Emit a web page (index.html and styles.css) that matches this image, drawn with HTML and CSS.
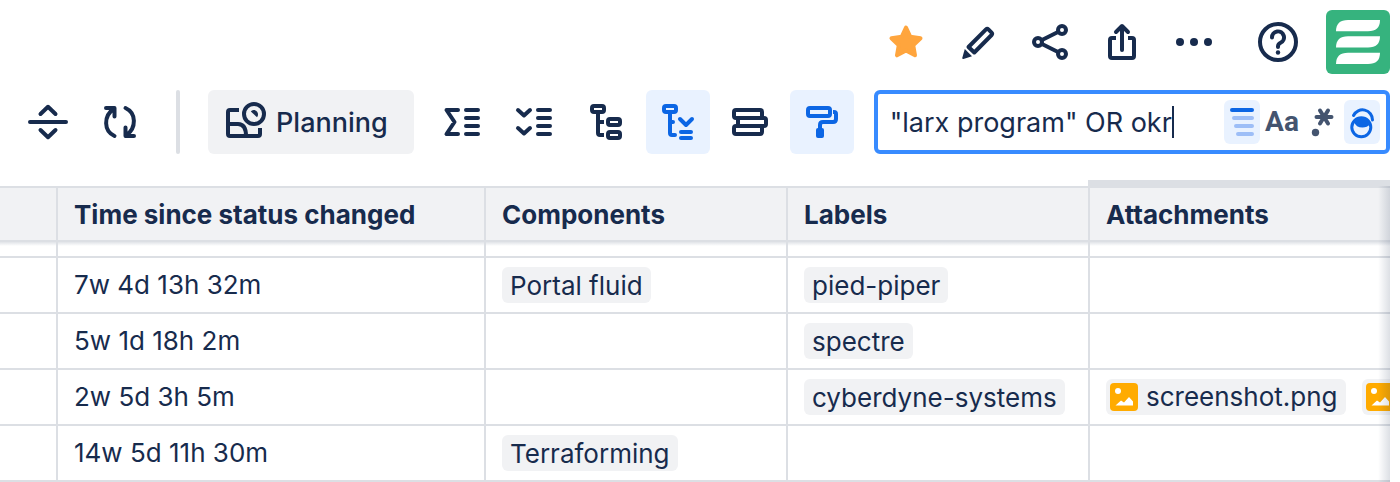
FILE: index.html
```html
<!DOCTYPE html>
<html lang="en">
<head>
    <meta charset="UTF-8">
    <meta name="viewport" content="width=device-width, initial-scale=1.0">
    <title>Structure</title>
    <link rel="stylesheet" href="styles.css">
</head>
<body>
    <header class="header">
        <button class="icon-btn" aria-label="Favourite">
            <svg viewBox="0 0 64 64"><path class="star" d="M32 17.500L36.300 26.800 46.500 28.200 39.200 35.200 41 45.300 32 40.400 23 45.300 24.800 35.200 17.500 28.200 27.700 26.800Z"/></svg>
        </button>
        <button class="icon-btn" aria-label="Edit">
            <svg viewBox="0 0 64 64"><path d="M22.500 37L40 19.400q1.200-1.200 2.400 0L45.600 22.600q1.200 1.200 0 2.400L28.300 42.500z"/><path class="solid" d="M18.800 39L26 46.300 17.500 48.900q-1.500.3-1.200-1.200z"/></svg>
        </button>
        <button class="icon-btn" aria-label="Share">
            <svg viewBox="0 0 64 64"><circle cx="20" cy="32" r="4"/><circle cx="44" cy="20" r="4"/><circle cx="44" cy="44" r="4"/><path d="M24 30l16-8M24 34l16 8"/></svg>
        </button>
        <button class="icon-btn" aria-label="Export">
            <svg viewBox="0 0 64 64"><path class="flat" d="M26 28h-4q-2 0-2 2v16q0 2 2 2h20q2 0 2-2V30q0-2-2-2h-4"/><path d="M32 17v23M26 22l6-6 6 6"/></svg>
        </button>
        <button class="icon-btn" aria-label="More">
            <svg viewBox="0 0 64 64"><g class="solid"><circle cx="18" cy="32" r="4"/><circle cx="32" cy="32" r="4"/><circle cx="46" cy="32" r="4"/></g></svg>
        </button>
        <button class="icon-btn help" aria-label="Help">
            <svg viewBox="0 0 64 64"><circle cx="32" cy="32" r="18"/><path d="M26 27.500a6 6 0 1 1 8.600 5.300q-2.600 1.200-2.600 3.700v.5"/><circle class="solid" cx="32" cy="42.500" r="2.200"/></svg>
        </button>
        <a class="logo" href="#" aria-label="Home">
            <svg viewBox="0 0 64 64"><path d="M10 21.300Q10 10 22 10H54Q54 21.300 42 21.300ZM10 37.600Q10 26.300 22 26.300H54Q54 37.600 42 37.600ZM10 54Q10 42.700 22 42.700H54Q54 54 42 54Z"/></svg>
        </a>
    </header>

    <div class="toolbar">
        <button class="icon-btn" aria-label="Expand">
            <svg viewBox="0 0 64 64"><path d="M24.500 24L32 16.800 39.500 24M14 32h36M24.500 40L32 47.200 39.500 40"/></svg>
        </button>
        <button class="icon-btn" aria-label="Refresh">
            <svg viewBox="0 0 64 64"><path d="M26.500 46C15.500 41 15.500 26 25.500 19M18 18h8.500v8.500M37.500 18C48.500 23 48.500 38 38.500 45M46 46h-8.500v-8.500"/></svg>
        </button>
        <span class="separator"></span>
        <button class="planning">
            <svg viewBox="0 0 40 36"><circle cx="28" cy="12" r="10"/><path class="solid" d="M24.800 9.500Q26 7.500 28.500 8 32 9 32 12.500 32 14 31 15.200Z"/><path class="flat" d="M13 8H4q-2 0-2 2v22q0 2 2 2h28q2 0 2-2v-6M2 22h10q8 0 8 12"/></svg>
            Planning
        </button>
        <button class="icon-btn" aria-label="Sum up">
            <svg viewBox="0 0 64 64"><path d="M28 20H16.500L24.500 32 16.500 44H28M36 20h12M36 28h12M36 36h12M36 44h12"/></svg>
        </button>
        <button class="icon-btn" aria-label="Expand levels">
            <svg viewBox="0 0 64 64"><path d="M16 20l6 5.500 6-5.500M16 38l6 5.500 6-5.500M36 20h12M36 28h12M36 36h12M36 44h12"/></svg>
        </button>
        <button class="icon-btn" aria-label="Hierarchy">
            <svg viewBox="0 0 64 64"><rect x="18" y="16" width="12" height="6" rx="2"/><rect x="34" y="29" width="12" height="6" rx="2"/><rect x="34" y="42" width="12" height="6" rx="2"/><path class="flat" d="M24 24V43q0 2 2 2h4M24 32h6"/></svg>
        </button>
        <button class="icon-btn active" aria-label="Filter with parents">
            <svg viewBox="0 0 64 64"><rect x="18" y="16" width="12" height="6" rx="2"/><path d="M24 24V43q0 2 2 2h3M24 32h3M34 29l6 6 6-6M35 42h10M35 48h10"/></svg>
        </button>
        <button class="icon-btn" aria-label="Group rows">
            <svg viewBox="0 0 64 64"><rect x="16" y="20" width="28" height="8" rx="2"/><rect x="20" y="28" width="28" height="8" rx="2"/><rect x="16" y="36" width="28" height="8" rx="2"/></svg>
        </button>
        <button class="icon-btn active" aria-label="Formatting">
            <svg viewBox="0 0 64 64"><rect x="18" y="18" width="22" height="8" rx="2"/><path class="flat" d="M43 22h1q2 0 2 2v5q0 3-3 3H33q-3 0-3 3v4"/><rect class="solid" x="26" y="38" width="8" height="10" rx="2"/></svg>
        </button>
        <div class="search">
            <input type="text" value="&quot;larx program&quot; OR okr" aria-label="Search">
            <span class="caret"></span>
            <div class="toggles">
                <button class="active" aria-label="Filter">
                    <svg viewBox="0 0 36 44"><path d="M8 10h20"/><path class="pale" d="M10 18h18M12 26h16M14 34h14"/></svg>
                </button>
                <button class="match-case" aria-label="Match case">Aa</button>
                <button aria-label="Regular expression">
                    <svg viewBox="0 0 36 44"><path d="M12.500 17h15M16 10.500l8 13M24 10.500l-8 13"/><circle class="solid" cx="11.500" cy="32.500" r="3.700"/></svg>
                </button>
                <button class="active" aria-label="Highlight matches">
                    <svg viewBox="0 0 36 44"><g class="thin"><circle cx="17.300" cy="27.300" r="9.500"/><path d="M9.500 15.500A10 10 0 0 1 28.500 20"/></g><path class="solid" d="M8 25A9.500 9.500 0 0 1 26.500 24Q23 27.500 18.500 27.500 12 27.500 10 22Z"/></svg>
                </button>
            </div>
        </div>
    </div>

    <div class="grid">
        <table>
            <colgroup>
                <col class="col-edge"><col class="col-time"><col class="col-mid"><col class="col-mid"><col>
            </colgroup>
            <thead>
                <tr><th></th><th>Time since status changed</th><th>Components</th><th>Labels</th><th class="dragged">Attachments</th></tr>
            </thead>
            <tbody>
                <tr class="cut"><td></td><td></td><td></td><td></td><td></td></tr>
                <tr><td></td><td>7w 4d 13h 32m</td><td><span class="tag">Portal fluid</span></td><td><span class="tag">pied-piper</span></td><td></td></tr>
                <tr><td></td><td>5w 1d 18h 2m</td><td></td><td><span class="tag">spectre</span></td><td></td></tr>
                <tr>
                    <td></td><td>2w 5d 3h 5m</td><td></td><td><span class="tag">cyberdyne-systems</span></td>
                    <td>
                        <div class="files">
                            <span class="tag file"><svg viewBox="0 0 28 28"><circle cx="8" cy="8" r="3"/><path d="M5.500 22.500L11 17.500 14 19.500 19 14 23 18.500V22.500Z"/></svg>screenshot.png</span>
                            <span class="tag file"><svg viewBox="0 0 28 28"><circle cx="8" cy="8" r="3"/><path d="M5.500 22.500L11 17.500 14 19.500 19 14 23 18.500V22.500Z"/></svg></span>
                        </div>
                    </td>
                </tr>
                <tr><td></td><td>14w 5d 11h 30m</td><td><span class="tag">Terraforming</span></td><td></td><td></td></tr>
            </tbody>
        </table>
    </div>
</body>
</html>
```
FILE: styles.css
```css
* { margin: 0; padding: 0; box-sizing: border-box; }
body { background-color: #fff; color: #172b4d; font-family: Inter, sans-serif; font-size: 26px; padding: 10px 10px 0 0; }
button, input { font: inherit; color: inherit; border: none; background: none; }
button { cursor: pointer; }
svg { display: block; fill: none; stroke: currentColor; stroke-width: 4; stroke-linecap: round; stroke-linejoin: round; }
.solid { fill: currentColor; stroke: none; }
.flat { stroke-linecap: butt; }

.header { display: flex; justify-content: flex-end; gap: 8px; }
.icon-btn { flex: none; width: 64px; height: 64px; border-radius: 6px; }
.star { fill: #ffa53d; stroke: #ffa53d; stroke-width: 4; }
.help { margin: 0 8px 0 12px; }
.logo { width: 64px; height: 64px; border-radius: 6px; background-color: #36b37e; }
.logo path { fill: #fff; stroke: none; }

.toolbar { display: flex; gap: 8px; margin-top: 16px; padding-left: 16px; font-size: 27px; }
.active { background-color: #e9f2ff; color: #0c66e4; }
.separator { flex: none; width: 4px; margin: 0 20px 0 16px; border-radius: 2px; background-color: #dcdfe4; }
.planning { display: flex; align-items: center; gap: 10px; flex: none; height: 64px; padding: 0 26px 0 18px; margin-right: 8px; border-radius: 6px; background-color: #f1f2f4; font-weight: 500; }
.planning svg { width: 40px; height: 36px; margin-bottom: 4px; }

.search { display: flex; align-items: center; flex: 1; min-width: 0; height: 64px; margin-left: 12px; padding: 0 6px 0 12px; border: 4px solid #388bff; border-radius: 6px; }
.search input { field-sizing: content; outline: none; }
.caret { width: 2px; height: 32px; background-color: #172b4d; }
.toggles { display: flex; gap: 4px; margin-left: auto; color: #44546f; }
.toggles button { width: 36px; height: 44px; border-radius: 6px; }
.toggles .active { color: #0c66e4; }
.toggles .match-case { font-family: Roboto, sans-serif; font-size: 28px; font-weight: bold; line-height: 44px; }
.pale { stroke: #9dbef7; }
.thin { stroke-width: 3; }

.grid { position: relative; overflow: hidden; margin-top: 26px; padding-top: 6px; }
.grid::after { content: ""; position: absolute; top: 6px; right: 0; bottom: 0; width: 12px; background: linear-gradient(to right, rgba(9,30,66,0), rgba(9,30,66,0.14)); }
table { width: 100%; table-layout: fixed; border-collapse: separate; border-spacing: 0; }
.col-edge { width: 58px; }
.col-time { width: 428px; }
.col-mid { width: 302px; }
th, td { height: 56px; padding: 0 16px; border-right: 2px solid #dcdfe4; border-bottom: 2px solid #dcdfe4; text-align: left; vertical-align: middle; line-height: 36px; white-space: nowrap; }
th { padding-top: 2px; background-color: #f1f2f4; border-top: 2px solid #dcdfe4; font-weight: 700; }
th:last-child, td:last-child { border-right: none; }
.cut td { height: 16px; padding: 0; background: linear-gradient(rgba(9,30,66,0.12), rgba(9,30,66,0) 4px); }
.dragged { position: relative; }
.dragged::before { content: ""; position: absolute; top: -8px; left: -2px; right: 0; height: 8px; background-color: #dcdfe4; }
.tag { display: block; width: fit-content; height: 36px; padding: 0 8px; border-radius: 6px; background-color: #f1f2f4; line-height: 38px; }
.files { display: flex; gap: 16px; }
.file { display: flex; align-items: center; flex: none; gap: 8px; padding-left: 4px; }
.file svg { width: 28px; height: 28px; border-radius: 4px; background-color: #ffab00; fill: #fff; stroke: none; }
```
